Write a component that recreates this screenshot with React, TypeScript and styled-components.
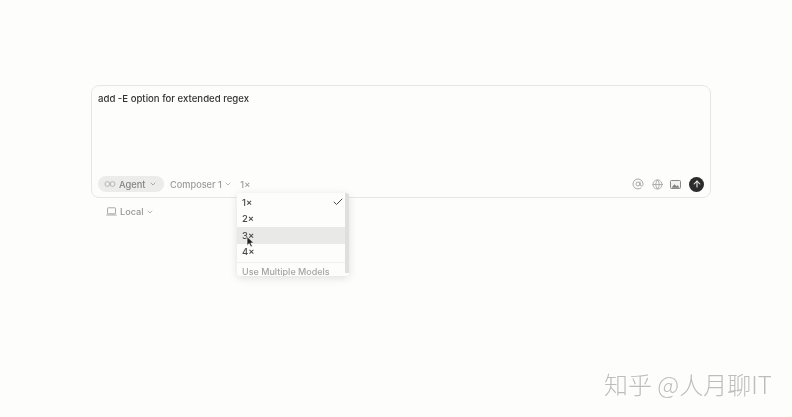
import React from "react";
import styled, { createGlobalStyle } from "styled-components";
import { ChevronDown, Check, Globe, AtSign, ArrowUp } from "lucide-react";

const GlobalStyle = createGlobalStyle`
    html, body {
        margin: 0;
        padding: 0;
        background: #fdfdfc;
    }
    body {
        font-family: Inter, "Liberation Sans", sans-serif;
    }
`;

const Page = styled.div`
    position: relative;
    width: 792px;
    height: 417px;
    overflow: hidden;
    padding: 85px 0 0 91px;
    box-sizing: border-box;
    filter: blur(0.45px);
`;

const Composer = styled.div`
    width: 620px;
    height: 113px;
    box-sizing: border-box;
    border: 1px solid #e6e6e4;
    border-radius: 8px;
    display: flex;
    flex-direction: column;
    justify-content: space-between;
    padding: 6px 6px 5px 6px;
`;

const Prompt = styled.div`
    font-size: 9.6px;
    font-weight: 500;
    line-height: 14px;
    color: #333;
`;

const Toolbar = styled.div`
    display: flex;
    align-items: center;
    justify-content: space-between;
`;

const ToolGroup = styled.div`
    display: flex;
    align-items: center;
    gap: 6px;
`;

const AgentPill = styled.div`
    display: flex;
    align-items: center;
    gap: 3px;
    width: 66px;
    height: 16px;
    box-sizing: border-box;
    padding: 0 6px;
    border-radius: 8px;
    background: #ececea;
    color: #858585;
    font-size: 9.3px;
    font-weight: 500;
`;

const ToolLabel = styled.div<{ $gapLeft?: number }>`
    display: flex;
    align-items: center;
    gap: 2.5px;
    margin-left: ${({ $gapLeft }) => $gapLeft ?? 0}px;
    color: #9c9c9c;
    font-size: 9.2px;
    font-weight: 500;
`;

const IconGroup = styled.div`
    display: flex;
    align-items: center;
    gap: 7.5px;
    color: #a8a8a8;
`;

const SendButton = styled.div`
    width: 15px;
    height: 15px;
    margin-left: 0.5px;
    border-radius: 50%;
    background: #2b2b2b;
    color: #f4f4f4;
    display: flex;
    align-items: center;
    justify-content: center;
`;

const LocalRow = styled.div`
    display: flex;
    align-items: center;
    gap: 3px;
    margin: 8px 0 0 15px;
    color: #949494;
    font-size: 9.1px;
    font-weight: 500;
`;

const Menu = styled.div`
    position: absolute;
    left: 237px;
    top: 193px;
    width: 112px;
    height: 83px;
    background: #fdfdfc;
    border-radius: 3px;
    box-shadow: 0 2px 8px rgba(0, 0, 0, 0.12);
    overflow: hidden;
    padding-top: 1px;
    box-sizing: border-box;
    z-index: 2;
`;

const MenuItem = styled.div<{ $active?: boolean }>`
    display: flex;
    align-items: center;
    justify-content: space-between;
    height: 16.5px;
    padding: 0 5px;
    font-size: 9.5px;
    font-weight: 500;
    color: #4a4a4a;
    background: ${({ $active }) => ($active ? "#e9e9e8" : "transparent")};
`;

const MenuDivider = styled.div`
    height: 1px;
    margin-top: 2px;
    background: #f0f0ef;
`;

const MenuFooter = styled.div`
    padding: 3px 5px 0;
    font-size: 9px;
    font-weight: 500;
    color: #a4a4a4;
`;

const ScrollThumb = styled.div`
    position: absolute;
    right: 0;
    top: 0;
    width: 4px;
    height: 80px;
    background: #dfdfde;
`;

const Cursor = styled.svg`
    position: absolute;
    left: 246px;
    top: 236px;
    z-index: 3;
`;

const Watermark = styled.div`
    position: absolute;
    left: 604px;
    top: 368px;
    font-family: "Noto Sans CJK SC", "Liberation Sans", sans-serif;
    font-size: 24px;
    font-weight: 300;
    line-height: 32px;
    color: #bdbdbd;
    white-space: nowrap;
    text-shadow: 1px 1px 1px rgba(255, 255, 255, 0.8);
`;

const AgentIcon = () => (
    <svg width="12" height="8" viewBox="0 0 12 8" fill="none" stroke="#a8a8a8" strokeWidth="0.8">
        <circle cx="3.4" cy="4" r="2.4" />
        <circle cx="8.6" cy="4" r="2.4" />
    </svg>
);

const LaptopIcon = () => (
    <svg width="11" height="9" viewBox="0 0 11 9" fill="none" stroke="#a0a0a0" strokeWidth="0.9">
        <rect x="1.5" y="0.8" width="8" height="6" rx="0.6" />
        <path d="M0.3 8 H10.7" />
    </svg>
);

const PictureIcon = () => (
    <svg width="11" height="9" viewBox="0 0 11 9">
        <rect x="0.5" y="0.5" width="10" height="8" rx="1" fill="#f2f2f1" stroke="#7e7e7e" strokeWidth="0.9" />
        <path d="M1.5 7.7 L4.4 4.2 L6.4 6.2 L7.6 5.2 L9.6 7.7 Z" fill="#7e7e7e" />
    </svg>
);

const App: React.FC = () => {
    return (
        <Page>
            <GlobalStyle />
            <Composer>
                <Prompt>add -E option for extended regex</Prompt>
                <Toolbar>
                    <ToolGroup>
                        <AgentPill>
                            <AgentIcon />
                            Agent
                            <ChevronDown size={8} />
                        </AgentPill>
                        <ToolLabel>
                            Composer 1
                            <ChevronDown size={8} />
                        </ToolLabel>
                        <ToolLabel $gapLeft={2}>1×</ToolLabel>
                    </ToolGroup>
                    <IconGroup>
                        <AtSign size={12} />
                        <Globe size={11} />
                        <PictureIcon />
                        <SendButton>
                            <ArrowUp size={10} strokeWidth={2.5} />
                        </SendButton>
                    </IconGroup>
                </Toolbar>
            </Composer>
            <LocalRow>
                <LaptopIcon />
                Local
                <ChevronDown size={8} />
            </LocalRow>
            <Menu>
                <MenuItem>
                    1×
                    <Check size={12} />
                </MenuItem>
                <MenuItem>2×</MenuItem>
                <MenuItem $active>3×</MenuItem>
                <MenuItem>4×</MenuItem>
                <MenuDivider />
                <MenuFooter>Use Multiple Models</MenuFooter>
                <ScrollThumb />
            </Menu>
            <Cursor width="9" height="12" viewBox="0 0 9 12">
                <path d="M1 0.5 L1 9.5 L3.2 7.6 L4.8 11 L6.4 10.3 L4.8 7 L7.8 7 Z" fill="#222" stroke="#fff" strokeWidth="0.7" />
            </Cursor>
            <Watermark>知乎 @人月聊IT</Watermark>
        </Page>
    );
};

export default App;
